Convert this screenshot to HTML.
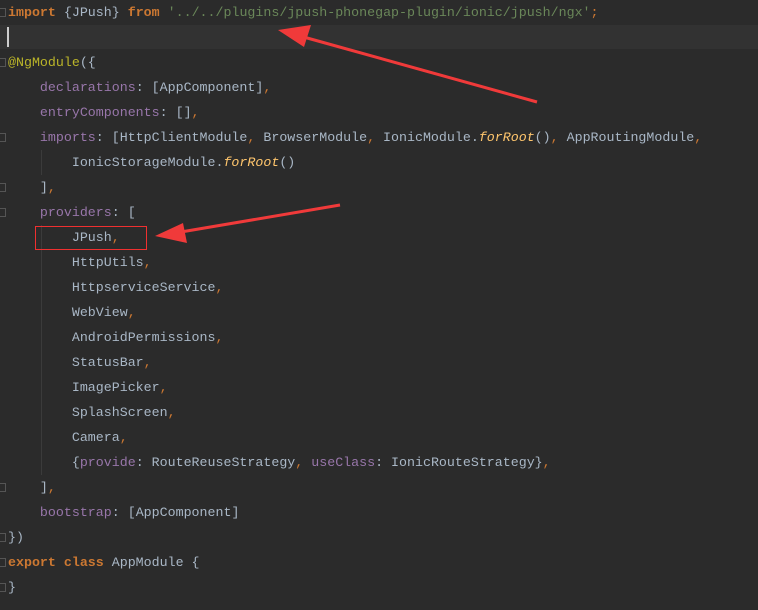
<!DOCTYPE html>
<html><head><style>
body{margin:0;width:758px;height:610px;background:#2b2b2b;overflow:hidden;position:relative}
pre{position:absolute;left:8px;top:0;margin:0;font-family:"Liberation Mono",monospace;font-size:13.3px;line-height:25px;color:#a9b7c6}
.k{color:#cc7832;font-weight:bold}.s{color:#6a8759}.p{color:#9876aa}.d{color:#bbb529}.f{color:#ffc66d;font-style:italic}.c{color:#cc7832}
.cl{position:absolute;left:0;top:25px;width:758px;height:24px;background:#323232}
.cur{position:absolute;left:7px;top:27px;width:2px;height:20px;background:#ccc}
.g{position:absolute;width:1px;background:#3b3b3b}
.fold{position:absolute;left:0;width:6px;height:9px;border:1px solid #555;border-left:none;box-sizing:border-box}
</style></head><body>
<div class="cl"></div><div class="cur"></div>
<div class="g" style="left:41px;top:150px;height:25px"></div>
<div class="g" style="left:41px;top:225px;height:250px"></div>
<div class="fold" style="top:8px"></div><div class="fold" style="top:58px"></div><div class="fold" style="top:133px"></div><div class="fold" style="top:183px"></div><div class="fold" style="top:208px"></div><div class="fold" style="top:483px"></div><div class="fold" style="top:533px"></div><div class="fold" style="top:558px"></div><div class="fold" style="top:583px"></div>
<pre><span class="k">import</span> {JPush} <span class="k">from</span> <span class="s">'../../plugins/jpush-phonegap-plugin/ionic/jpush/ngx'</span><span class="c">;</span>

<span class="d">@NgModule</span>({
    <span class="p">declarations</span>: [AppComponent]<span class="c">,</span>
    <span class="p">entryComponents</span>: []<span class="c">,</span>
    <span class="p">imports</span>: [HttpClientModule<span class="c">,</span> BrowserModule<span class="c">,</span> IonicModule.<span class="f">forRoot</span>()<span class="c">,</span> AppRoutingModule<span class="c">,</span>
        IonicStorageModule.<span class="f">forRoot</span>()
    ]<span class="c">,</span>
    <span class="p">providers</span>: [
        JPush<span class="c">,</span>
        HttpUtils<span class="c">,</span>
        HttpserviceService<span class="c">,</span>
        WebView<span class="c">,</span>
        AndroidPermissions<span class="c">,</span>
        StatusBar<span class="c">,</span>
        ImagePicker<span class="c">,</span>
        SplashScreen<span class="c">,</span>
        Camera<span class="c">,</span>
        {<span class="p">provide</span>: RouteReuseStrategy<span class="c">,</span> <span class="p">useClass</span>: IonicRouteStrategy}<span class="c">,</span>
    ]<span class="c">,</span>
    <span class="p">bootstrap</span>: [AppComponent]
})
<span class="k">export class</span> AppModule {
}</pre>
<div style="position:absolute;left:35px;top:226px;width:112px;height:24px;border:1px solid #f03030;box-sizing:border-box"></div>
<svg style="position:absolute;left:0;top:0" width="758" height="610">
<line x1="537" y1="102" x2="300" y2="36" stroke="#f03a3a" stroke-width="3"/>
<polygon points="278,30 311,25 304,47" fill="#f03a3a"/>
<line x1="340" y1="205" x2="175" y2="233" stroke="#f03a3a" stroke-width="3"/>
<polygon points="155,236 183,223 187,243" fill="#f03a3a"/>
</svg>
</body></html>
